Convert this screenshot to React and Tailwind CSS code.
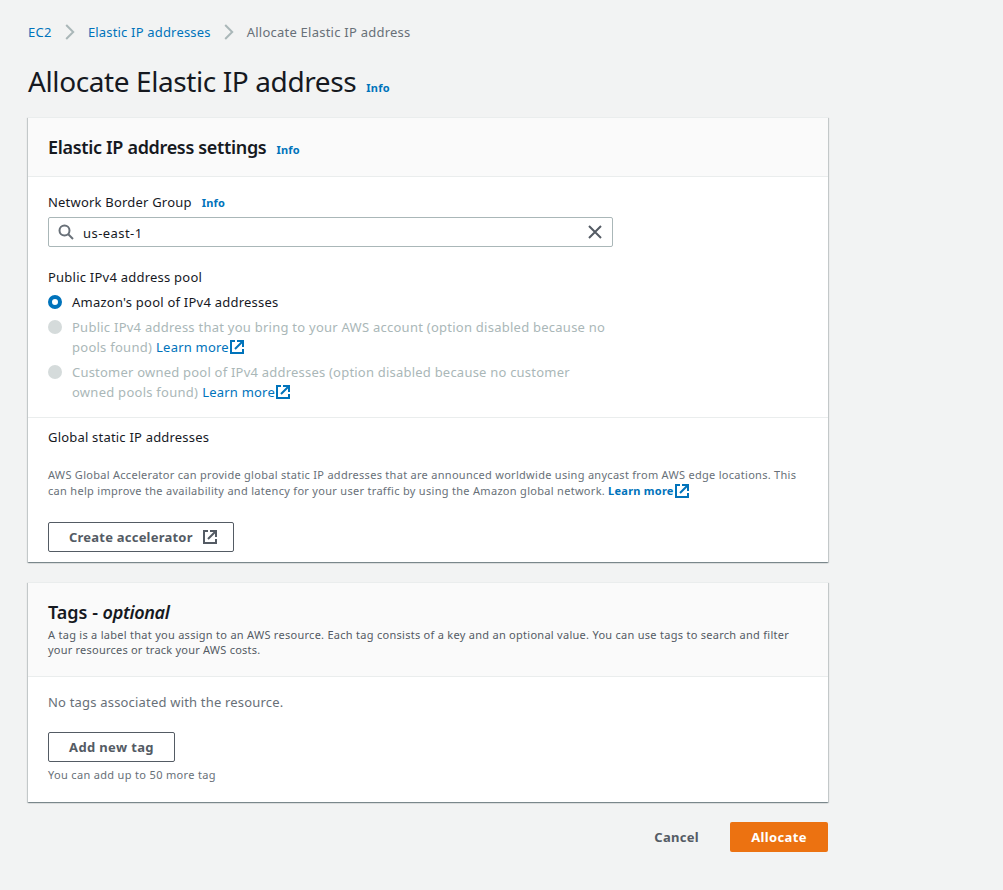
function ExternalIcon({ className = '' }) {
  return (
    <svg viewBox="0 0 16 16" className={`shrink-0 ${className}`} fill="none" stroke="currentColor" strokeWidth="2">
      <path d="M6 2H2v12h12V10" />
      <path d="M8 2h6v6M14 2 6 10" />
    </svg>
  );
}

function Chevron() {
  return (
    <svg viewBox="0 0 10 16" className="mr-[13px] ml-[13px] h-4 w-[10px] shrink-0 text-[#aab7b8]" fill="none" stroke="currentColor" strokeWidth="2">
      <path d="M1.200 1 8.200 8 1.200 15" />
    </svg>
  );
}

function Info() {
  return <a className="ml-[10px] text-[11px] font-bold tracking-[0.25px] text-[#0073bb]">Info</a>;
}

function Card({ header, headerClass, children, className = '' }) {
  return (
    <section className={`w-[800px] bg-white shadow-[0_1px_1px_0_rgba(0,28,36,0.3),1px_1px_1px_0_rgba(0,28,36,0.15),-1px_1px_1px_0_rgba(0,28,36,0.15)] ${className}`}>
      <header className={`border-t border-b border-[#eaeded] bg-[#fafafa] px-5 ${headerClass}`}>{header}</header>
      {children}
    </section>
  );
}

function DisabledOption({ first, second, firstClass }) {
  return (
    <div className="mt-[5px] flex gap-[10px] text-[#aab7b8]">
      <span className="mt-[3px] size-[14px] shrink-0 rounded-full bg-[#d5dbdb]" />
      <div>
        <div className={`whitespace-nowrap ${firstClass}`}>{first}</div>
        <div className="flex items-center whitespace-nowrap">
          <span className="tracking-[0.26px]">{second}</span>
          <a className="ml-1 flex items-center text-[#0073bb]">
            <span className="tracking-[0.2px]">Learn more</span>
            <ExternalIcon className="size-4" />
          </a>
        </div>
      </div>
    </div>
  );
}

export default function App() {
  return (
    <main className="min-h-[890px] bg-[#f2f3f3] px-7 pt-[22px] font-['Noto_Sans',sans-serif] text-[13px] leading-5 text-[#16191f]">
      <nav className="flex h-5 items-center whitespace-nowrap text-[#0073bb]">
        <a className="tracking-[0.33px]">EC2</a>
        <Chevron />
        <a className="tracking-[0.18px]">Elastic IP addresses</a>
        <Chevron />
        <span className="tracking-[0.24px] text-[#687078]">Allocate Elastic IP address</span>
      </nav>

      <div className="mt-[21px] flex h-9 items-baseline whitespace-nowrap">
        <h1 className="text-[28px] leading-9 tracking-[-0.4px]">Allocate Elastic IP address</h1>
        <Info />
      </div>

      <Card
        className="mt-[18px] h-[445px]"
        headerClass="flex h-[60px] items-baseline pt-[17px]"
        header={
          <>
            <h2 className="text-[18px] leading-6 font-semibold tracking-[-0.33px]">Elastic IP address settings</h2>
            <Info />
          </>
        }
      >
        <div className="h-[241px] border-b border-[#eaeded] px-5 pt-[15px]">
          <div className="flex h-5 items-baseline">
            <label className="tracking-[0.2px]">Network Border Group</label>
            <Info />
          </div>
          <div className="mt-[5px] flex h-[30px] w-[565px] items-center rounded-[2px] border border-[#aab7b8] px-[9px]">
            <svg viewBox="0 0 16 16" className="size-4 text-[#687078]" fill="none" stroke="currentColor" strokeWidth="2">
              <circle cx="6.500" cy="6.500" r="5" />
              <path d="m10 10 5 5" />
            </svg>
            <span className="ml-[9px] grow pt-px tracking-[0.44px]">us-east-1</span>
            <svg viewBox="0 0 16 16" className="size-4 text-[#545b64]" fill="none" stroke="currentColor" strokeWidth="2">
              <path d="m2 2 12 12M14 2 2 14" />
            </svg>
          </div>
          <div className="mt-5 tracking-[0.23px]">Public IPv4 address pool</div>
          <div className="mt-[5px] flex gap-[10px]">
            <span className="mt-[3px] size-[14px] shrink-0 rounded-full border-4 border-[#0073bb] bg-white" />
            <span className="tracking-[0.23px]">Amazon's pool of IPv4 addresses</span>
          </div>
          <DisabledOption
            first="Public IPv4 address that you bring to your AWS account (option disabled because no"
            second="pools found)"
            firstClass="tracking-[0.25px]"
          />
          <DisabledOption
            first="Customer owned pool of IPv4 addresses (option disabled because no customer"
            second="owned pools found)"
            firstClass="tracking-[0.215px]"
          />
        </div>
        <div className="px-5 pt-[9px]">
          <h3 className="tracking-[0.2px]">Global static IP addresses</h3>
          <div className="mt-5 text-[11px] leading-4 whitespace-nowrap text-[#687078]">
            <div className="tracking-[0.285px]">AWS Global Accelerator can provide global static IP addresses that are announced worldwide using anycast from AWS edge locations. This</div>
            <div className="flex items-center">
              <span className="tracking-[0.3px]">can help improve the availability and latency for your user traffic by using the Amazon global network.</span>
              <a className="ml-[3px] flex items-center font-bold tracking-[0.25px] text-[#0073bb]">
                Learn more
                <ExternalIcon className="size-4" />
              </a>
            </div>
          </div>
          <button className="mt-[23px] flex h-[30px] w-[186px] items-center rounded-[2px] border border-[#545b64] pl-5 font-bold tracking-[0.22px] text-[#545b64]">
            Create accelerator
            <ExternalIcon className="ml-[9px] size-4" />
          </button>
        </div>
      </Card>

      <Card
        className="mt-5 h-[220px]"
        headerClass="h-[95px] pt-[17px]"
        header={
          <>
            <h2 className="text-[18px] leading-6 font-semibold">Tags - <em className="tracking-[-0.35px]">optional</em></h2>
            <div className="mt-[3px] text-[11px] leading-[15px] whitespace-nowrap text-[#545b64]">
              <div className="tracking-[0.275px]">A tag is a label that you assign to an AWS resource. Each tag consists of a key and an optional value. You can use tags to search and filter</div>
              <div className="tracking-[0.22px]">your resources or track your AWS costs.</div>
            </div>
          </>
        }
      >
        <div className="px-5 pt-[15px] text-[#687078]">
          <p className="tracking-[0.19px]">No tags associated with the resource.</p>
          <button className="mt-5 flex h-[30px] w-[127px] items-center justify-center rounded-[2px] border border-[#545b64] font-bold tracking-[0.36px] text-[#545b64]">Add new tag</button>
          <p className="mt-[5px] text-[11px] leading-4 tracking-[0.33px]">You can add up to 50 more tag</p>
        </div>
      </Card>

      <div className="mt-5 flex h-[30px] w-[800px] items-center justify-end font-bold tracking-[0.35px] text-[#545b64]">
        <button className="mr-[31px] tracking-[0.3px]">Cancel</button>
        <button className="h-[30px] w-[98px] rounded-[2px] bg-[#ec7211] text-white">Allocate</button>
      </div>
    </main>
  );
}
